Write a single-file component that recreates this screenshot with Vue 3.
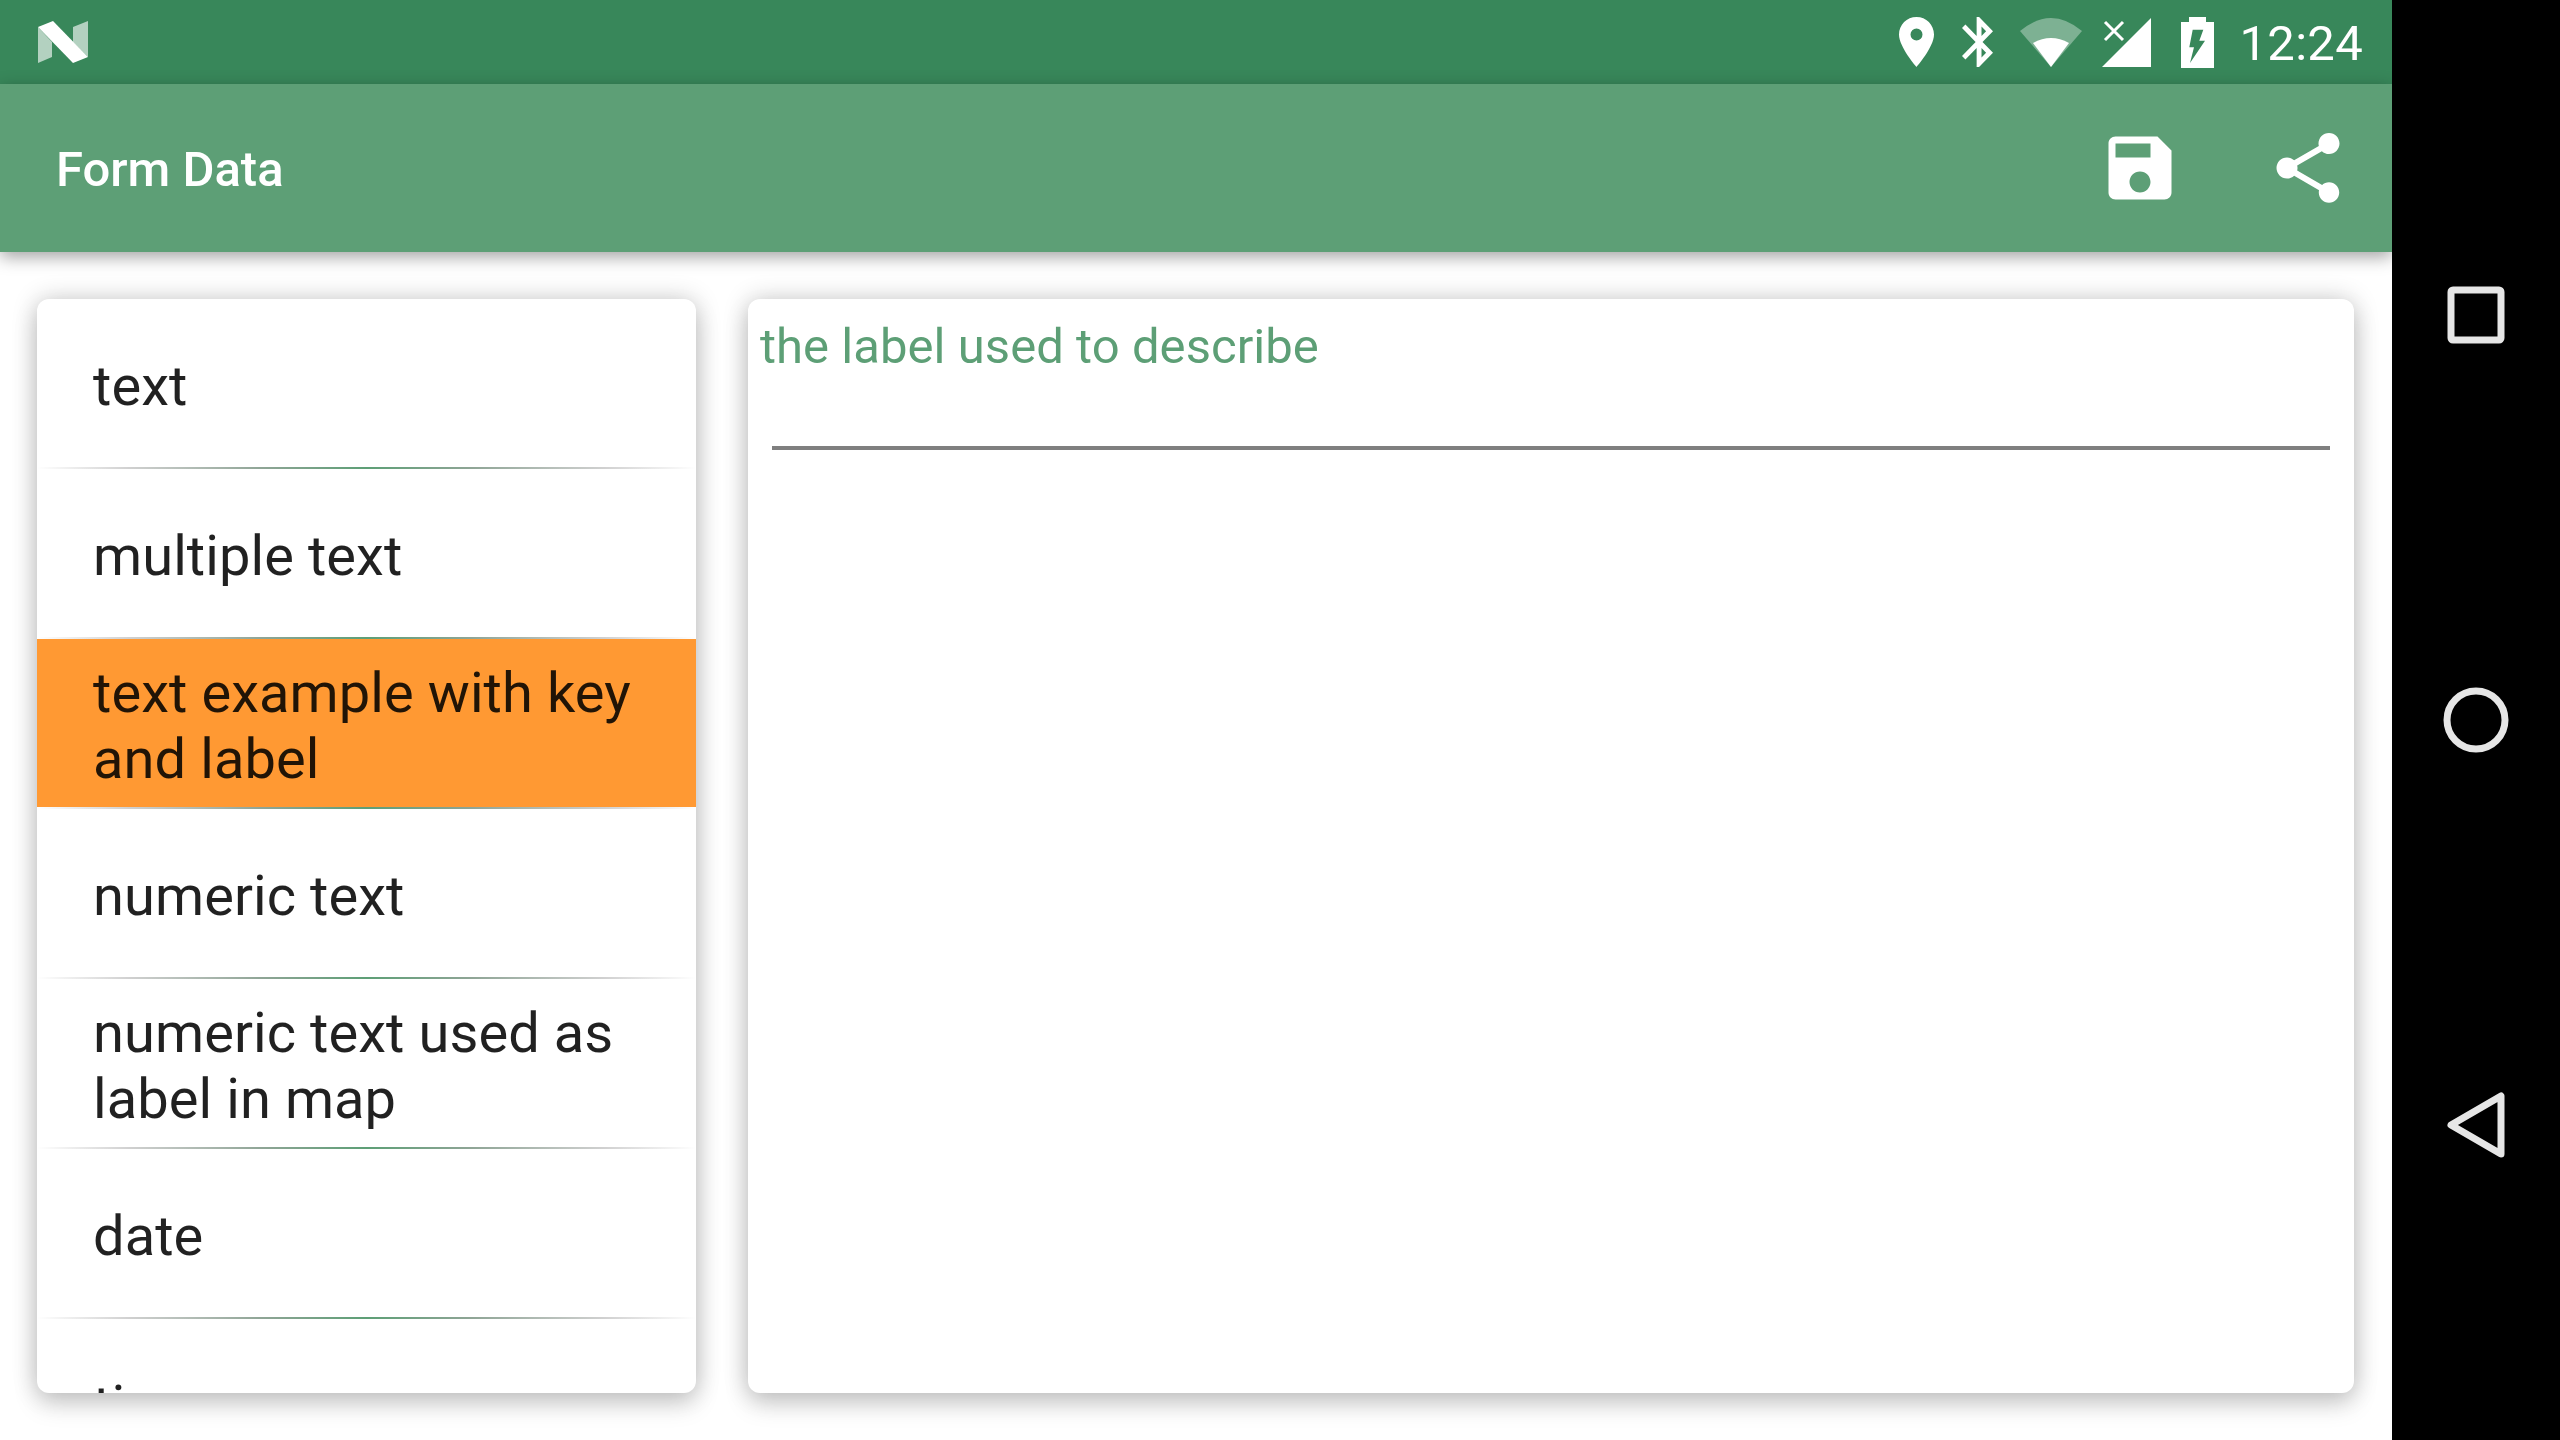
<script setup>
const items = [
  { label: 'text' },
  { label: 'multiple text' },
  { label: 'text example with key and label', active: true },
  { label: 'numeric text' },
  { label: 'numeric text used as label in map' },
  { label: 'date' },
  { label: 'time' }
]
</script>

<template>
  <div class="device">
    <div class="screen">
      <header class="status">
        <svg class="logo" width="50" height="42" viewBox="0 0 50 42">
          <path d="M0 6L14 21V36L0 42Z" fill="#fff" fill-opacity=".62" />
          <path d="M35 6L50 0V36L35 21Z" fill="#fff" fill-opacity=".62" />
          <path d="M0 6L15 0L50 36L35 42Z" fill="#fff" />
        </svg>
        <div class="status-right">
          <svg class="pin" width="35" height="50" viewBox="0 0 35 50">
            <path fill-rule="evenodd" fill="#fff" d="M17.5 0C7.8 0 0 7.8 0 17.5 0 30 17.5 50 17.5 50S35 30 35 17.5C35 7.8 27.2 0 17.5 0ZM17.5 11.5a6 6 0 1 1 0 12 6 6 0 0 1 0-12Z" />
          </svg>
          <svg class="bt" width="31" height="50" viewBox="5 2 12.71 20" preserveAspectRatio="none">
            <path fill="#fff" d="M17.71 7.71L12 2h-1v7.59L6.41 5 5 6.41 10.59 12 5 17.59 6.41 19 11 14.41V22h1l5.71-5.71-4.3-4.29 4.3-4.29zM13 5.83l1.88 1.88L13 9.59V5.83zm1.88 10.46L13 18.17v-3.76l1.88 1.88z" />
          </svg>
          <svg class="wifi" width="62" height="49" viewBox="0 0 62 49">
            <path d="M0 13Q31 -13 62 13L31 49Z" fill="#fff" fill-opacity=".35" />
            <path d="M13 25Q31 15 49 25L31 49Z" fill="#fff" />
          </svg>
          <svg class="signal" width="49" height="49" viewBox="0 0 49 49">
            <path d="M0 49L49 0V49Z" fill="#fff" />
            <path d="M3 4L21 22M21 4L3 22" stroke="#fff" stroke-width="3" fill="none" />
          </svg>
          <svg class="battery" width="33" height="51" viewBox="0 0 33 51">
            <path fill-rule="evenodd" fill="#fff" d="M8 0H25V5H33V51H0V5H8ZM11.7 12.7H22.3L18.3 23.7H24L9 46L13 30.3H8.3Z" />
          </svg>
          <span class="time">12:24</span>
        </div>
      </header>

      <nav class="toolbar">
        <h1 class="title">Form Data</h1>
        <div class="actions">
          <button class="action" aria-label="Save">
            <svg width="84" height="84" viewBox="0 0 24 24">
              <path fill="#fff" d="M17 3H5c-1.11 0-2 .9-2 2v14c0 1.1.89 2 2 2h14c1.1 0 2-.9 2-2V7l-4-4zm-5 16c-1.66 0-3-1.34-3-3s1.34-3 3-3 3 1.34 3 3-1.34 3-3 3zm3-10H5V5h10v4z" />
            </svg>
          </button>
          <button class="action" aria-label="Share">
            <svg width="84" height="84" viewBox="0 0 24 24">
              <path fill="#fff" d="M18 16.08c-.76 0-1.44.3-1.96.77L8.91 12.7c.05-.23.09-.46.09-.7s-.04-.47-.09-.7l7.05-4.11c.54.5 1.25.81 2.04.81 1.66 0 3-1.34 3-3s-1.34-3-3-3-3 1.34-3 3c0 .24.04.47.09.7L8.04 9.81C7.5 9.31 6.79 9 6 9c-1.66 0-3 1.34-3 3s1.34 3 3 3c.79 0 1.5-.31 2.04-.81l7.12 4.16c-.05.21-.08.43-.08.65 0 1.61 1.31 2.92 2.92 2.92 1.61 0 2.92-1.31 2.92-2.92s-1.31-2.92-2.92-2.92z" />
            </svg>
          </button>
        </div>
      </nav>

      <main class="content">
        <section class="panel panel-list">
          <ul class="card list">
            <li v-for="item in items" :key="item.label" class="item" :class="{ active: item.active }">
              <span class="item-label">{{ item.label }}</span>
            </li>
          </ul>
        </section>
        <section class="panel panel-form">
          <div class="card form">
            <label class="field-label">the label used to describe</label>
            <div class="field-line"></div>
          </div>
        </section>
      </main>
    </div>

    <aside class="navbar">
      <svg width="84" height="84" viewBox="0 0 84 84" fill="none" stroke="#e6e6e6" stroke-width="7">
        <rect x="17" y="17" width="50" height="50" rx="2" />
      </svg>
      <svg width="84" height="84" viewBox="0 0 84 84" fill="none" stroke="#e6e6e6" stroke-width="7">
        <circle cx="42" cy="42" r="29" />
      </svg>
      <svg width="84" height="84" viewBox="0 0 84 84" fill="none" stroke="#e6e6e6" stroke-width="7" stroke-linejoin="round">
        <path d="M17 42L67 13V71Z" />
      </svg>
    </aside>
  </div>
</template>

<style>
html, body { margin: 0; background: #fff; }
</style>

<style scoped>
.device {
  display: flex;
  width: 2560px;
  height: 1440px;
  overflow: hidden;
  background: #fff;
  font-family: Roboto, "Liberation Sans", sans-serif;
}
.screen {
  flex: 1;
  display: flex;
  flex-direction: column;
  min-width: 0;
}
.status {
  height: 84px;
  flex: none;
  display: flex;
  align-items: center;
  justify-content: space-between;
  padding: 0 29px 0 38px;
  background: #38875a;
  color: #fff;
}
.status-right { display: flex; align-items: center; }
.status svg { display: block; }
.bt { margin-left: 28px; }
.wifi { margin-left: 27px; }
.signal { margin-left: 20px; }
.battery { margin-left: 30px; }
.time {
  margin-left: 25px;
  padding-top: 4px;
  font-size: 49px;
  line-height: 56px;
  letter-spacing: 0.3px;
}
.toolbar {
  position: relative;
  z-index: 2;
  height: 168px;
  flex: none;
  display: flex;
  align-items: center;
  justify-content: space-between;
  padding-left: 56px;
  background: #5d9f76;
  box-shadow: 0 5px 16px rgba(0, 0, 0, 0.36);
}
.title {
  margin: 0;
  padding-top: 3px;
  font-size: 49px;
  font-weight: 500;
  color: #fff;
}
.actions { display: flex; }
.action {
  width: 168px;
  height: 168px;
  padding: 0;
  border: 0;
  background: none;
  display: flex;
  align-items: center;
  justify-content: center;
}
.content {
  flex: 1;
  min-height: 0;
  display: flex;
  padding: 0 11px;
}
.panel {
  overflow: hidden;
  padding: 47px 26px;
  box-sizing: border-box;
}
.panel-list { width: 711px; flex: none; }
.panel-form { flex: 1; min-width: 0; padding-right: 27px; }
.card {
  height: 100%;
  box-sizing: border-box;
  background: #fff;
  border-radius: 12px;
  box-shadow: 0 0 26px rgba(0, 0, 0, 0.2), 0 12px 24px rgba(0, 0, 0, 0.15);
  overflow: hidden;
}
.list {
  margin: 0;
  padding: 0;
  list-style: none;
}
.item {
  height: 168px;
  box-sizing: border-box;
  display: flex;
  align-items: center;
  padding: 6px 56px 0;
  margin-bottom: 2px;
  position: relative;
  font-size: 56px;
  line-height: 66px;
  letter-spacing: 0.08px;
  color: rgba(0, 0, 0, 0.87);
}
.item::after {
  content: "";
  position: absolute;
  left: 0;
  right: 0;
  bottom: -2px;
  height: 2px;
  background: linear-gradient(90deg, #fff 0%, #d0d0d0 14%, #8fa596 34%, #5d9f76 50%, #8fa596 66%, #d0d0d0 86%, #fff 100%);
}
.item.active { background: #ff9933; }
.form { padding: 1px 24px 0 12px; }
.field-label {
  display: block;
  font-size: 49px;
  line-height: 56px;
  margin-top: 19px;
  letter-spacing: 0.05px;
  color: #5d9f76;
}
.field-line {
  height: 4px;
  margin: 71px 0 0 12px;
  background: #7f7f7f;
}
.navbar {
  width: 168px;
  flex: none;
  box-sizing: border-box;
  background: #000;
  display: flex;
  flex-direction: column;
  align-items: center;
  justify-content: center;
  gap: 321px;
  position: relative;
  z-index: 3;
}
</style>
